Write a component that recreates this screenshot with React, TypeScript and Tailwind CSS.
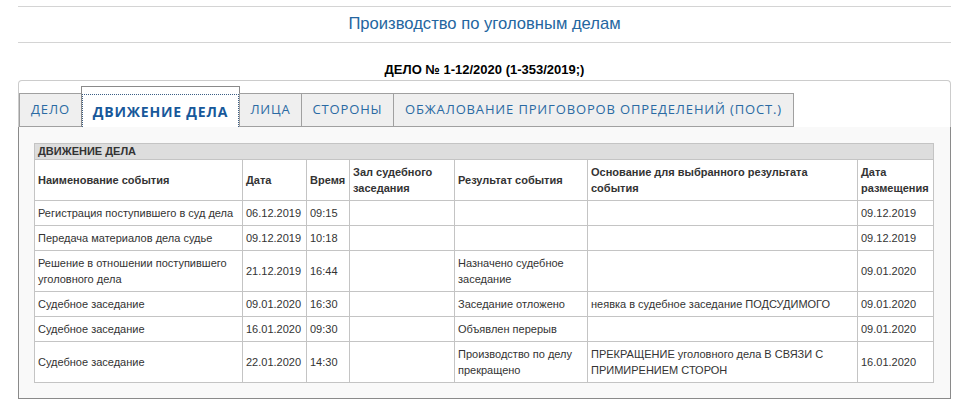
import React from "react";

const rows: { name: string; date: string; time: string; hall: string; result: string; basis: string; posted: string }[] = [
  { name: "Регистрация поступившего в суд дела", date: "06.12.2019", time: "09:15", hall: "", result: "", basis: "", posted: "09.12.2019" },
  { name: "Передача материалов дела судье", date: "09.12.2019", time: "10:18", hall: "", result: "", basis: "", posted: "09.12.2019" },
  { name: "Решение в отношении поступившего уголовного дела", date: "21.12.2019", time: "16:44", hall: "", result: "Назначено судебное заседание", basis: "", posted: "09.01.2020" },
  { name: "Судебное заседание", date: "09.01.2020", time: "16:30", hall: "", result: "Заседание отложено", basis: "неявка в судебное заседание ПОДСУДИМОГО", posted: "09.01.2020" },
  { name: "Судебное заседание", date: "16.01.2020", time: "09:30", hall: "", result: "Объявлен перерыв", basis: "", posted: "09.01.2020" },
  { name: "Судебное заседание", date: "22.01.2020", time: "14:30", hall: "", result: "Производство по делу прекращено", basis: "ПРЕКРАЩЕНИЕ уголовного дела В СВЯЗИ С ПРИМИРЕНИЕМ СТОРОН", posted: "16.01.2020" },
];

const td = "border border-[#c4c4c4] px-[3px] py-[4px] align-middle";

export default function App() {
  return (
    <div className="w-[961px] h-[404px] bg-white overflow-hidden" style={{ fontFamily: '"Liberation Sans", Arial, sans-serif' }}>
      <div className="ml-[18px] mr-[10px] pt-[6px]">
        <div className="border-t border-[#d4d4d4] pt-[7px] pb-[8px] text-center text-[16.6px] leading-[20px] text-[#2466a0]">
          Производство по уголовным делам
        </div>
        <div className="border-t border-[#d4d4d4] pt-[19px] pb-[3px] text-center text-[13px] leading-[15px] font-bold text-black">
          ДЕЛО № 1-12/2020 (1-353/2019;)
        </div>
        <div className="border-t border-x border-[#cccccc] rounded-t-[4px]">
          <div className="flex items-end pt-[5px] text-[13px] tracking-[0.85px] text-[#2a6aa3]" style={{ fontFamily: '"Open Sans", sans-serif' }}>
            <div className="w-[63px] h-[34px] border border-[#a0a0a0] bg-[#efefef] flex items-center justify-center">ДЕЛО</div>
            <div className="w-[159px] h-[41px] -ml-px border-t border-x border-[#8a8a8a] bg-white flex flex-col">
              <div className="mt-[7px] flex-1 border border-dotted border-[#3c5f85] border-b-0 flex items-center justify-center font-bold text-[#17589a] text-[14px] tracking-[0.8px] pt-px">
                ДВИЖЕНИЕ ДЕЛА
              </div>
            </div>
            <div className="w-[63px] h-[34px] -ml-px border border-[#a0a0a0] bg-[#efefef] flex items-center justify-center">ЛИЦА</div>
            <div className="w-[93px] h-[34px] -ml-px border border-[#a0a0a0] bg-[#efefef] flex items-center justify-center">СТОРОНЫ</div>
            <div className="w-[401px] h-[34px] -ml-px border border-[#a0a0a0] bg-[#efefef] flex items-center justify-center">ОБЖАЛОВАНИЕ ПРИГОВОРОВ ОПРЕДЕЛЕНИЙ (ПОСТ.)</div>
          </div>
          <div className="-mx-px border-x border-b border-[#8a8a8a] bg-[#f9f9f9] pt-[16px] pb-[15px] pl-[15px] pr-[16px]">
            <table className="w-[899px] table-fixed border-collapse bg-white text-[11px] leading-[16px] text-[#333]">
              <colgroup>
                <col className="w-[208px]" />
                <col className="w-[64px]" />
                <col className="w-[43px]" />
                <col className="w-[105px]" />
                <col className="w-[133px]" />
                <col className="w-[270px]" />
                <col className="w-[76px]" />
              </colgroup>
              <tbody>
                <tr>
                  <td colSpan={7} className="border border-[#c4c4c4] bg-[#dddddd] px-[3px] py-0 leading-[15px] font-bold text-[#333]">ДВИЖЕНИЕ ДЕЛА</td>
                </tr>
                <tr className="font-bold">
                  <td className={td}>Наименование события</td>
                  <td className={td}>Дата</td>
                  <td className={td}>Время</td>
                  <td className={td}>Зал судебного заседания</td>
                  <td className={td}>Результат события</td>
                  <td className={td}>Основание для выбранного результата события</td>
                  <td className={td}>Дата размещения</td>
                </tr>
                {rows.map((r, i) => (
                  <tr key={i}>
                    <td className={td}>{r.name}</td>
                    <td className={td}>{r.date}</td>
                    <td className={td}>{r.time}</td>
                    <td className={td}>{r.hall}</td>
                    <td className={td}>{r.result}</td>
                    <td className={td}>{r.basis}</td>
                    <td className={td}>{r.posted}</td>
                  </tr>
                ))}
              </tbody>
            </table>
          </div>
        </div>
      </div>
    </div>
  );
}
